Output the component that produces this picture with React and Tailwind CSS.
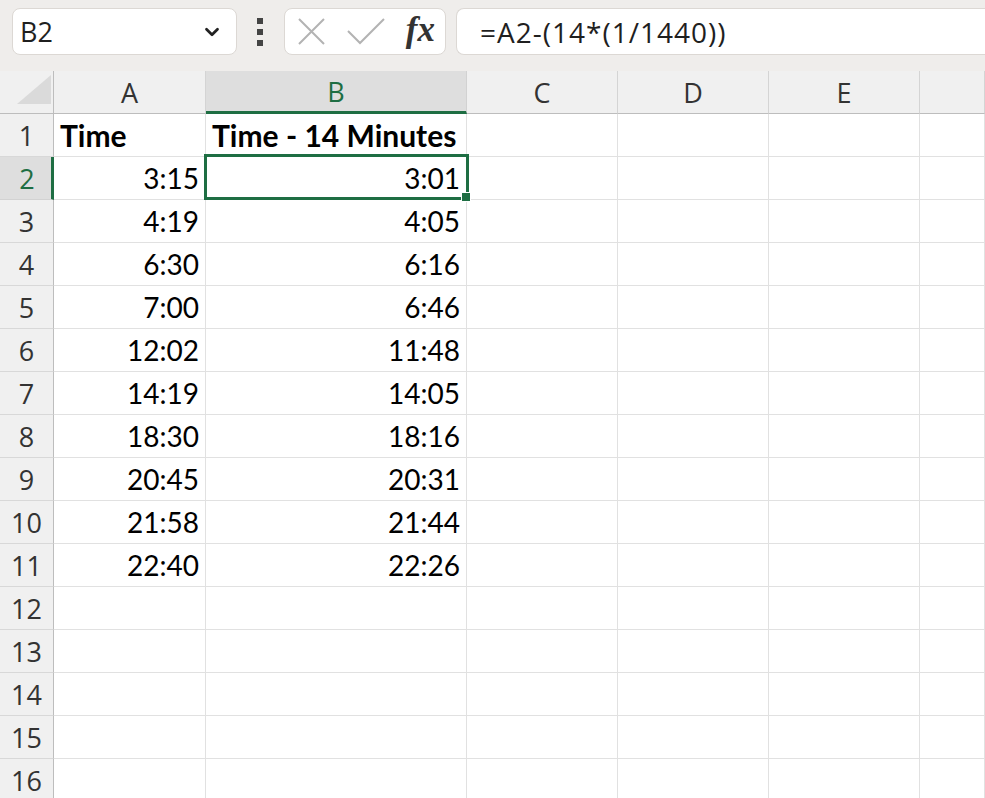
import { ChevronDown } from 'lucide-react';

const cols = ['A', 'B', 'C', 'D', 'E', ''];
const rows = [
  ['Time', 'Time - 14 Minutes'],
  ['3:15', '3:01'],
  ['4:19', '4:05'],
  ['6:30', '6:16'],
  ['7:00', '6:46'],
  ['12:02', '11:48'],
  ['14:19', '14:05'],
  ['18:30', '18:16'],
  ['20:45', '20:31'],
  ['21:58', '21:44'],
  ['22:40', '22:26'],
  ['', ''],
  ['', ''],
  ['', ''],
  ['', ''],
  ['', ''],
];

const grid = 'grid grid-cols-[54px_152px_261px_151px_151px_151px_1fr] grid-rows-[43px]';
const ui = { fontFamily: '"Open Sans", "Noto Sans", sans-serif' };
const cellFont = { fontFamily: 'Lato, "Liberation Sans", sans-serif' };

export default function App() {
  return (
    <div className="w-[985px] h-[798px] overflow-hidden bg-white" style={ui}>
      {/* formula bar */}
      <div className="h-[71px] bg-[#efedeb] flex items-start pt-[8px] pl-[12px]">
        <div className="w-[225px] h-[47px] shrink-0 bg-white border border-[#dcd8d4] rounded-[8px] flex items-center justify-between pl-[7px] pr-[13px]">
          <span className="text-[27px] text-[#1f1f1f] leading-none">B2</span>
          <ChevronDown size={22} strokeWidth={3} className="text-[#222]" />
        </div>
        <div className="ml-[20px] w-[6px] h-[47px] shrink-0 flex flex-col items-center justify-center gap-[5px]">
          <div className="w-[6px] h-[6px] bg-[#444]" />
          <div className="w-[6px] h-[6px] bg-[#444]" />
          <div className="w-[6px] h-[6px] bg-[#444]" />
        </div>
        <div className="ml-[21px] w-[162px] h-[47px] shrink-0 bg-white border border-[#dcd8d4] rounded-[8px] flex items-center pl-[13px] pr-[10px]">
          <svg width="27" height="27" viewBox="0 0 27 27">
            <path d="M1 1 L26 26 M26 1 L1 26" stroke="#b3b3b3" strokeWidth="2" fill="none" />
          </svg>
          <svg width="38" height="27" viewBox="0 0 38 27" className="ml-[22px]">
            <path d="M1 13 L13 25 L37 1" stroke="#b3b3b3" strokeWidth="2" fill="none" />
          </svg>
          <span
            className="ml-auto text-[35px] italic font-bold text-[#333] leading-none -mt-[4px]"
            style={{ fontFamily: '"Liberation Serif", "DejaVu Serif", serif' }}
          >
            fx
          </span>
        </div>
        <div className="ml-[10px] flex-1 h-[47px] bg-white border border-[#dcd8d4] border-r-0 rounded-l-[8px] flex items-center pl-[23px]">
          <span className="text-[28px] tracking-[1px] text-[#1f1f1f] leading-none">=A2-(14*(1/1440))</span>
        </div>
      </div>

      {/* column headers */}
      <div className={`${grid} h-[43px] bg-[#f0f0f0] leading-none`}>
        <div className="border-r border-b border-[#bdbdbd] flex items-end justify-end pr-[2px] pb-[9px]">
          <svg width="34" height="29" viewBox="0 0 34 29">
            <polygon points="34,0 34,29 0,29" fill="#dadada" />
          </svg>
        </div>
        {cols.map((c) => (
          <div
            key={c || 'f'}
            className={
              c === 'B'
                ? 'bg-[#dedede] border-r border-[#d2d2d2] border-b-[3px] border-b-[#1e6e43] flex items-center justify-center text-[27px] text-[#1e6e43]'
                : 'border-r border-b border-[#d4d4d4] border-b-[#bdbdbd] flex items-center justify-center text-[27px] text-[#333]'
            }
          >
            {c}
          </div>
        ))}
      </div>

      {/* rows */}
      {rows.map((r, i) => {
        const n = i + 1;
        const sel = n === 2;
        return (
          <div key={n} className={`${grid} h-[43px] leading-none`}>
            <div
              className={
                sel
                  ? 'bg-[#dedede] border-b border-[#d2d2d2] border-r-[3px] border-r-[#1e6e43] flex items-center justify-center pl-[3px] text-[27px] text-[#1e6e43]'
                  : 'bg-[#f0f0f0] border-b border-[#d8d8d8] border-r border-r-[#bdbdbd] flex items-center justify-center text-[27px] text-[#333]'
              }
            >
              {n}
            </div>
            {[0, 1, 2, 3, 4, 5].map((j) => {
              const v = r[j] || '';
              const header = n === 1;
              return (
                <div
                  key={j}
                  className={`relative border-r border-b border-[#e1e1e1] flex items-center text-black ${
                    header ? 'justify-start pl-[6px] font-bold text-[30px]' : 'justify-end pr-[6px] text-[28px]'
                  }`}
                  style={cellFont}
                >
                  {v}
                  {sel && j === 1 && (
                    <div className="absolute z-10 -left-[2px] -top-[3px] -right-[3px] -bottom-[1px] border-[3px] border-[#1e6e43] pointer-events-none">
                      <div className="absolute -right-[5px] -bottom-[5px] w-[10px] h-[10px] bg-[#1e6e43] border border-white" />
                    </div>
                  )}
                </div>
              );
            })}
          </div>
        );
      })}
    </div>
  );
}
